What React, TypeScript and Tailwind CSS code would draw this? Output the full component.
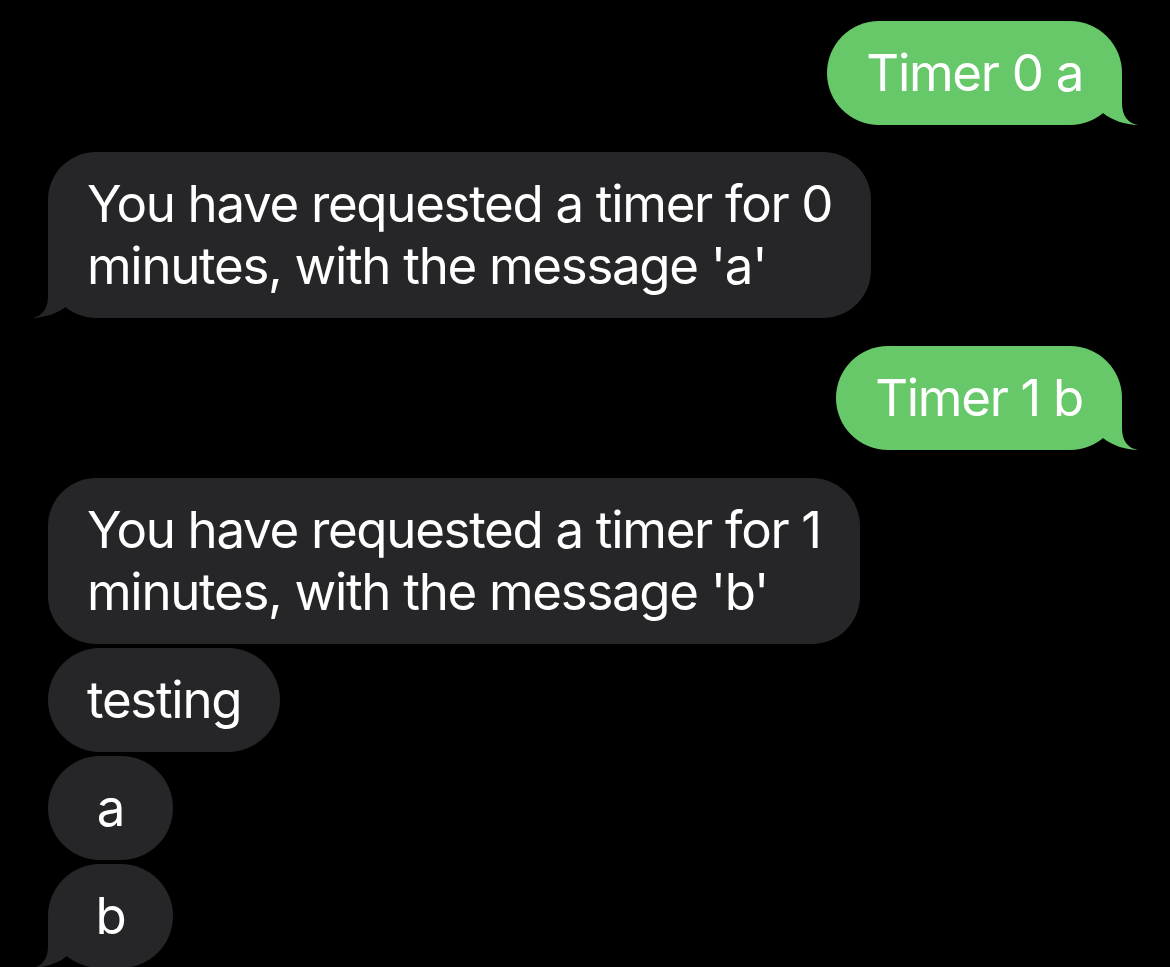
import type { ReactNode } from 'react';

type Side = 'me' | 'them';

function Tail({ side }: { side: Side }) {
  const fill = side === 'me' ? '#66C868' : '#262629';
  return (
    <svg
      width="56"
      height="50"
      viewBox="0 0 56 50"
      className={`pointer-events-none absolute bottom-0 ${side === 'me' ? 'right-[-16px]' : 'left-[-16px] -scale-x-100'}`}
    >
      <path d="M0 0 L40 0 L40 28 C40 40 45 48 56 50 C44 50 29 45 21 38 L0 30 Z" fill={fill} />
    </svg>
  );
}

function Bubble({
  side,
  tail = false,
  round = false,
  className = '',
  children,
}: {
  side: Side;
  tail?: boolean;
  round?: boolean;
  className?: string;
  children: ReactNode;
}) {
  const color = side === 'me' ? 'bg-[#66C868]' : 'bg-[#262629]';
  return (
    <div className={`flex ${side === 'me' ? 'justify-end' : 'justify-start'} ${className}`}>
      <div
        className={`relative ${color} ${round ? 'rounded-[52px]' : 'rounded-[48px]'} py-[21px] px-[39px] text-[51px] leading-[62px] tracking-[-1.3px] text-white whitespace-nowrap`}
      >
        {tail && <Tail side={side} />}
        <span className="relative">{children}</span>
      </div>
    </div>
  );
}

export default function App() {
  return (
    <div
      className="h-[967px] overflow-hidden bg-black px-[48px] pt-[21px]"
      style={{ fontFamily: 'Inter, "Noto Sans", sans-serif' }}
    >
      <Bubble side="me" tail round>
        Timer 0 a
      </Bubble>
      <Bubble side="them" tail className="mt-[27px]">
        You have requested a timer for 0
        <br />
        minutes, with the message 'a'
      </Bubble>
      <Bubble side="me" tail round className="mt-[28px]">
        Timer 1 b
      </Bubble>
      <Bubble side="them" className="mt-[28px]">
        You have requested a timer for 1
        <br />
        minutes, with the message 'b'
      </Bubble>
      <Bubble side="them" round className="mt-[4px]">
        testing
      </Bubble>
      <Bubble side="them" round className="mt-[4px]">
        <span className="inline-block min-w-[47px] text-center">a</span>
      </Bubble>
      <Bubble side="them" tail round className="mt-[4px]">
        <span className="inline-block min-w-[47px] text-center">b</span>
      </Bubble>
    </div>
  );
}
